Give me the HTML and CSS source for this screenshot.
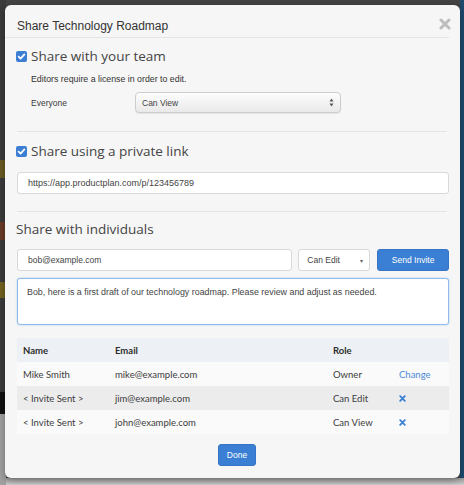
FILE: index.html
```html
<!DOCTYPE html>
<html lang="en">
<head>
  <meta charset="UTF-8" />
  <meta name="viewport" content="width=device-width, initial-scale=1" />
  <title>Share Technology Roadmap</title>
  <link rel="stylesheet" href="styles.css">
</head>
<body>

<div class="modal">
  <div class="modal-header">
    <h1>Share Technology Roadmap</h1>
    <button class="close" aria-label="Close">
      <svg width="12" height="12" viewBox="0 0 12 12"><path d="M2 2 L10 10 M10 2 L2 10" stroke="#bdbdbd" stroke-width="3" stroke-linecap="round"/></svg>
    </button>
  </div>

  <div class="modal-body">
    <!-- team -->
    <div class="section-title">
      <span class="check"><svg width="11" height="11" viewBox="0 0 11 11"><rect width="11" height="11" rx="2" fill="#3b7fd4"/><path d="M2.6 5.6 L4.6 7.6 L8.4 3.4" fill="none" stroke="#fff" stroke-width="1.7" stroke-linecap="round" stroke-linejoin="round"/></svg></span>
      Share with your team
    </div>
    <p class="note">Editors require a license in order to edit.</p>
    <div class="team-row">
      <span class="team-label">Everyone</span>
      <div class="fancy-select">
        <span>Can View</span>
        <svg width="5" height="9" viewBox="0 0 5 9"><path d="M2.5 0.5 L4.5 3.4 L0.5 3.4 Z M2.5 8.5 L4.5 5.6 L0.5 5.6 Z" fill="#555"/></svg>
      </div>
    </div>

    <hr class="divider">

    <!-- private link -->
    <div class="section-title second">
      <span class="check"><svg width="11" height="11" viewBox="0 0 11 11"><rect width="11" height="11" rx="2" fill="#3b7fd4"/><path d="M2.6 5.6 L4.6 7.6 L8.4 3.4" fill="none" stroke="#fff" stroke-width="1.7" stroke-linecap="round" stroke-linejoin="round"/></svg></span>
      Share using a private link
    </div>
    <div class="field url">https://app.productplan.com/p/123456789</div>

    <hr class="divider second">

    <!-- individuals -->
    <div class="section-title third">Share with individuals</div>
    <div class="invite-row">
      <div class="field email">bob@example.com</div>
      <div class="field role-select">
        <span>Can Edit</span>
        <span class="caret">&#9662;</span>
      </div>
      <button class="btn">Send Invite</button>
    </div>
    <div class="message">Bob, here is a first draft of our technology roadmap. Please review and adjust as needed.</div>

    <table class="people">
      <thead>
        <tr><th class="c-name">Name</th><th class="c-email">Email</th><th class="c-role">Role</th><th class="c-act"></th></tr>
      </thead>
      <tbody>
        <tr><td>Mike Smith</td><td>mike@example.com</td><td>Owner</td><td><a class="link">Change</a></td></tr>
        <tr class="shade"><td>&lt; Invite Sent &gt;</td><td>jim@example.com</td><td>Can Edit</td><td><svg class="x" width="7" height="7" viewBox="0 0 7 7"><path d="M1.2 1.2 L5.8 5.8 M5.8 1.2 L1.2 5.8" stroke="#3b7fd4" stroke-width="1.8" stroke-linecap="round"/></svg></td></tr>
        <tr><td>&lt; Invite Sent &gt;</td><td>john@example.com</td><td>Can View</td><td><svg class="x" width="7" height="7" viewBox="0 0 7 7"><path d="M1.2 1.2 L5.8 5.8 M5.8 1.2 L1.2 5.8" stroke="#3b7fd4" stroke-width="1.8" stroke-linecap="round"/></svg></td></tr>
      </tbody>
    </table>

    <div class="modal-footer">
      <button class="btn done">Done</button>
    </div>
  </div>
</div>

</body>
</html>
```

FILE: styles.css
```css
:root {
  --blue: #3b7fd4;
  --text: #3a3a3a;
  --line: #e4e4e4;
  --panel: #f6f6f6;
}

html, body {
  height: 100%;
}

body {
  margin: 0;
  padding: 5px 0 0 5px;
  box-sizing: border-box;
  font-family: "Liberation Sans", Arial, sans-serif;
  color: var(--text);
  /* dimmed app behind the dialog */
  background:
    linear-gradient(to bottom,
      #3b3b3b 0 160px, #6b5a22 160px 178px, #3b3b3b 178px 222px,
      #6a3b26 222px 240px, #3b3b3b 240px 282px, #75621f 282px 298px,
      #3b3b3b 298px 392px, #111 392px 414px, #a2a2a2 414px) 0 0 / 6px 100% no-repeat,
    linear-gradient(to right, transparent 460px, #1e4a6e 460px) 0 0 / 100% 478px no-repeat,
    linear-gradient(to bottom, #444 0 478px, #9c9c9c 478px, #cfcfcf);
}

.modal {
  position: relative;
  width: 455px;
  background: var(--panel);
  border-radius: 6px;
  box-shadow: 0 2px 8px rgba(0, 0, 0, 0.35);
}

.modal-header {
  padding: 14px 12px 4px;
  border-bottom: 1px solid var(--line);
  margin: 0 11px 0 0;
}

.modal-header h1 {
  margin: 0;
  font-size: 12px;
  line-height: 14px;
  font-weight: normal;
  color: #333;
}

.close {
  position: absolute;
  top: 13px;
  right: 9px;
  padding: 0;
  border: 0;
  background: none;
  line-height: 0;
}

.modal-body {
  padding: 0 11px 12px 12px;
}

.section-title {
  display: flex;
  align-items: center;
  gap: 4px;
  margin-top: 8px;
  font-family: "Open Sans", sans-serif;
  font-size: 13.5px;
  line-height: 20px;
  color: #444;
  margin-left: -1px;
}

.section-title.second {
  margin-top: 9px;
}

.section-title.third {
  margin-top: 7px;
}

.check {
  display: flex;
  line-height: 0;
}

.note {
  margin: 5px 0 0 14px;
  font-size: 8.8px;
  line-height: 16px;
  color: #333;
}

.team-row {
  display: flex;
  align-items: center;
  margin: 5px 0 0 14px;
  font-size: 8.5px;
}

.team-label {
  width: 104px;
}

.fancy-select {
  width: 206px;
  height: 21px;
  box-sizing: border-box;
  display: flex;
  align-items: center;
  justify-content: space-between;
  padding: 0 6px 0 6px;
  border: 1px solid #cdcdcd;
  border-radius: 4px;
  background: linear-gradient(to bottom, #fdfdfd, #e9e9e9);
  box-shadow: 0 1px 1px rgba(0, 0, 0, 0.08);
  color: #444;
}

.divider {
  margin: 18px 2px 0 0;
  border: 0;
  border-top: 1px solid var(--line);
}

.divider.second {
  margin-top: 17px;
}

.field {
  height: 22px;
  box-sizing: border-box;
  display: flex;
  align-items: center;
  padding: 0 10px;
  background: #fff;
  border: 1px solid #d9d9d9;
  border-radius: 3px;
  font-size: 8.5px;
  color: #444;
}

.url {
  margin-top: 11px;
  font-size: 9px;
}

.invite-row {
  display: flex;
  gap: 6px;
  margin-top: 10px;
}

.email {
  width: 276px;
}

.role-select {
  width: 72px;
  padding: 0 6px 0 8px;
  justify-content: space-between;
}

.caret {
  font-size: 6px;
  color: #666;
}

.btn {
  height: 22px;
  padding: 0 12px;
  border: 1px solid #3574c6;
  border-radius: 3px;
  background: var(--blue);
  color: #fff;
  font-family: "Liberation Sans", Arial, sans-serif;
  font-size: 8.5px;
}

.invite-row .btn {
  width: 72px;
  padding: 0;
  margin-left: 1px;
}

.message {
  margin-top: 7px;
  height: 47px;
  box-sizing: border-box;
  padding: 7px 9px;
  background: #fff;
  border: 1px solid #8fbbea;
  border-radius: 3px;
  box-shadow: 0 0 2px rgba(80, 150, 230, 0.45);
  font-size: 8.9px;
  line-height: 12px;
  color: #444;
}

.people {
  width: 432px;
  margin-top: 13px;
  border-collapse: collapse;
  font-family: Lato, sans-serif;
  font-size: 9.5px;
  color: #3c3c3c;
}

.people th,
.people td {
  height: 24px;
  padding: 0 0 0 6px;
  text-align: left;
}

.people th {
  background: #edf1f5;
  font-weight: bold;
  color: #2e2e2e;
}

.people tbody tr {
  background: #fafafa;
}

.people tbody tr.shade {
  background: #ececec;
}

.c-name { width: 86px; }
.c-email { width: 212px; }
.c-role { width: 60px; }

.link {
  color: #4a8cd6;
}

.x {
  display: block;
  margin-left: 0;
}

.modal-footer {
  display: flex;
  justify-content: center;
  margin-top: 10px;
  padding-left: 8px;
}

.done {
  width: 38px;
  padding: 0;
}
```
